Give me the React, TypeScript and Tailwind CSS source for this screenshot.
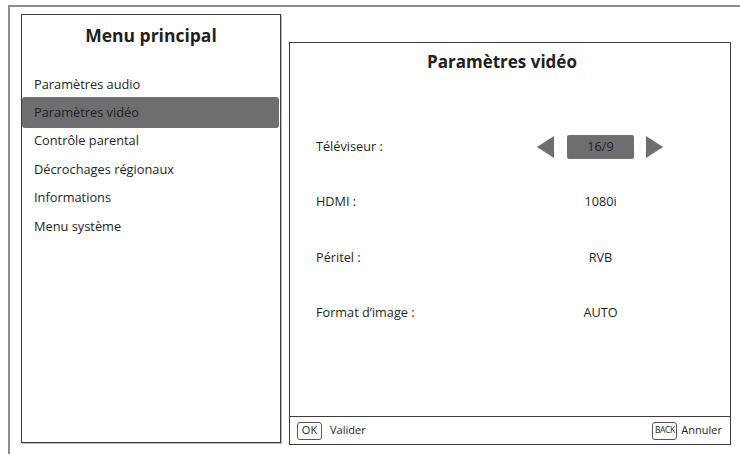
import React from 'react';

const menuItems = [
  'Paramètres audio',
  'Paramètres vidéo',
  'Contrôle parental',
  'Décrochages régionaux',
  'Informations',
  'Menu système',
];

const ArrowLeft = () => (
  <svg width="17" height="22" viewBox="0 0 17 22">
    <polygon points="17,0 17,22 0,11" fill="#6d6e71" />
  </svg>
);

const ArrowRight = () => (
  <svg width="17" height="22" viewBox="0 0 17 22">
    <polygon points="0,0 0,22 17,11" fill="#6d6e71" />
  </svg>
);

const SettingRow = ({ label, value, selected }: { label: string; value: string; selected?: boolean }) => (
  <div className="flex h-[55.3px] items-center pl-[26px]">
    <div className="w-[221px] text-[12.7px] text-[#231f20]">{label}</div>
    <div className="flex w-[30px] items-center">{selected && <ArrowLeft />}</div>
    {selected ? (
      <div className="flex h-[24px] w-[67px] items-center justify-center rounded-[2px] bg-[#6d6e71] text-[12.7px] text-[#231f20]">
        {value}
      </div>
    ) : (
      <div className="w-[67px] text-center text-[12.7px] text-[#231f20]">{value}</div>
    )}
    <div className="ml-[12px] flex items-center">{selected && <ArrowRight />}</div>
  </div>
);

export default function App() {
  return (
    <div
      className="h-[454px] w-[740px] overflow-hidden bg-white pl-[8px] pt-[5px]"
      style={{ fontFamily: '"Open Sans", "Noto Sans", sans-serif' }}
    >
      <div className="flex h-[480px] w-[760px] items-start border-l-2 border-t-2 border-[#8c8c8c] pl-[11px] pt-[7px]">
        {/* Menu principal */}
        <div className="flex h-[429px] w-[260px] flex-col border border-[#3c3c3c] shadow-[1px_1px_0_#bbb]">
          <div className="flex h-[40px] items-center justify-center text-[17.5px] font-bold text-[#231f20]">
            Menu principal
          </div>
          <div className="mt-[15px] flex flex-col">
            {menuItems.map((item, i) =>
              i === 1 ? (
                <div
                  key={item}
                  className="-my-[1.3px] mr-[1px] flex h-[31px] items-center rounded-[3px] bg-[#6d6e71] pl-[12px] text-[12.8px] text-[#231f20]"
                >
                  {item}
                </div>
              ) : (
                <div key={item} className="flex h-[28.4px] items-center pl-[12px] text-[12.8px] text-[#231f20]">
                  {item}
                </div>
              )
            )}
          </div>
        </div>

        {/* Paramètres vidéo */}
        <div className="ml-[8px] mt-[28px] flex h-[403px] w-[442px] flex-col border border-[#3c3c3c]">
          <div className="flex-1">
            <div className="flex h-[38px] items-center justify-center pr-[16px] text-[17px] font-bold text-[#231f20]">
              Paramètres vidéo
            </div>
            <div className="mt-[38px] flex flex-col">
              <SettingRow label="Téléviseur :" value="16/9" selected />
              <SettingRow label="HDMI :" value="1080i" />
              <SettingRow label="Péritel :" value="RVB" />
              <SettingRow label="Format d’image :" value="AUTO" />
            </div>
          </div>
          <div className="flex h-[28px] items-center justify-between border-t border-[#3c3c3c] pl-[7px] pr-[8px] text-[11px] text-[#231f20]">
            <div className="flex items-center gap-[8px]">
              <span className="flex h-[18px] w-[25px] items-center justify-center rounded-[3px] border border-[#555] text-[11px]">
                OK
              </span>
              <span>Valider</span>
            </div>
            <div className="flex items-center gap-[4px]">
              <span className="flex h-[18px] w-[25px] items-center justify-center rounded-[3px] border border-[#555] text-[8.5px] tracking-[-0.4px]">
                BACK
              </span>
              <span>Annuler</span>
            </div>
          </div>
        </div>
      </div>
    </div>
  );
}
